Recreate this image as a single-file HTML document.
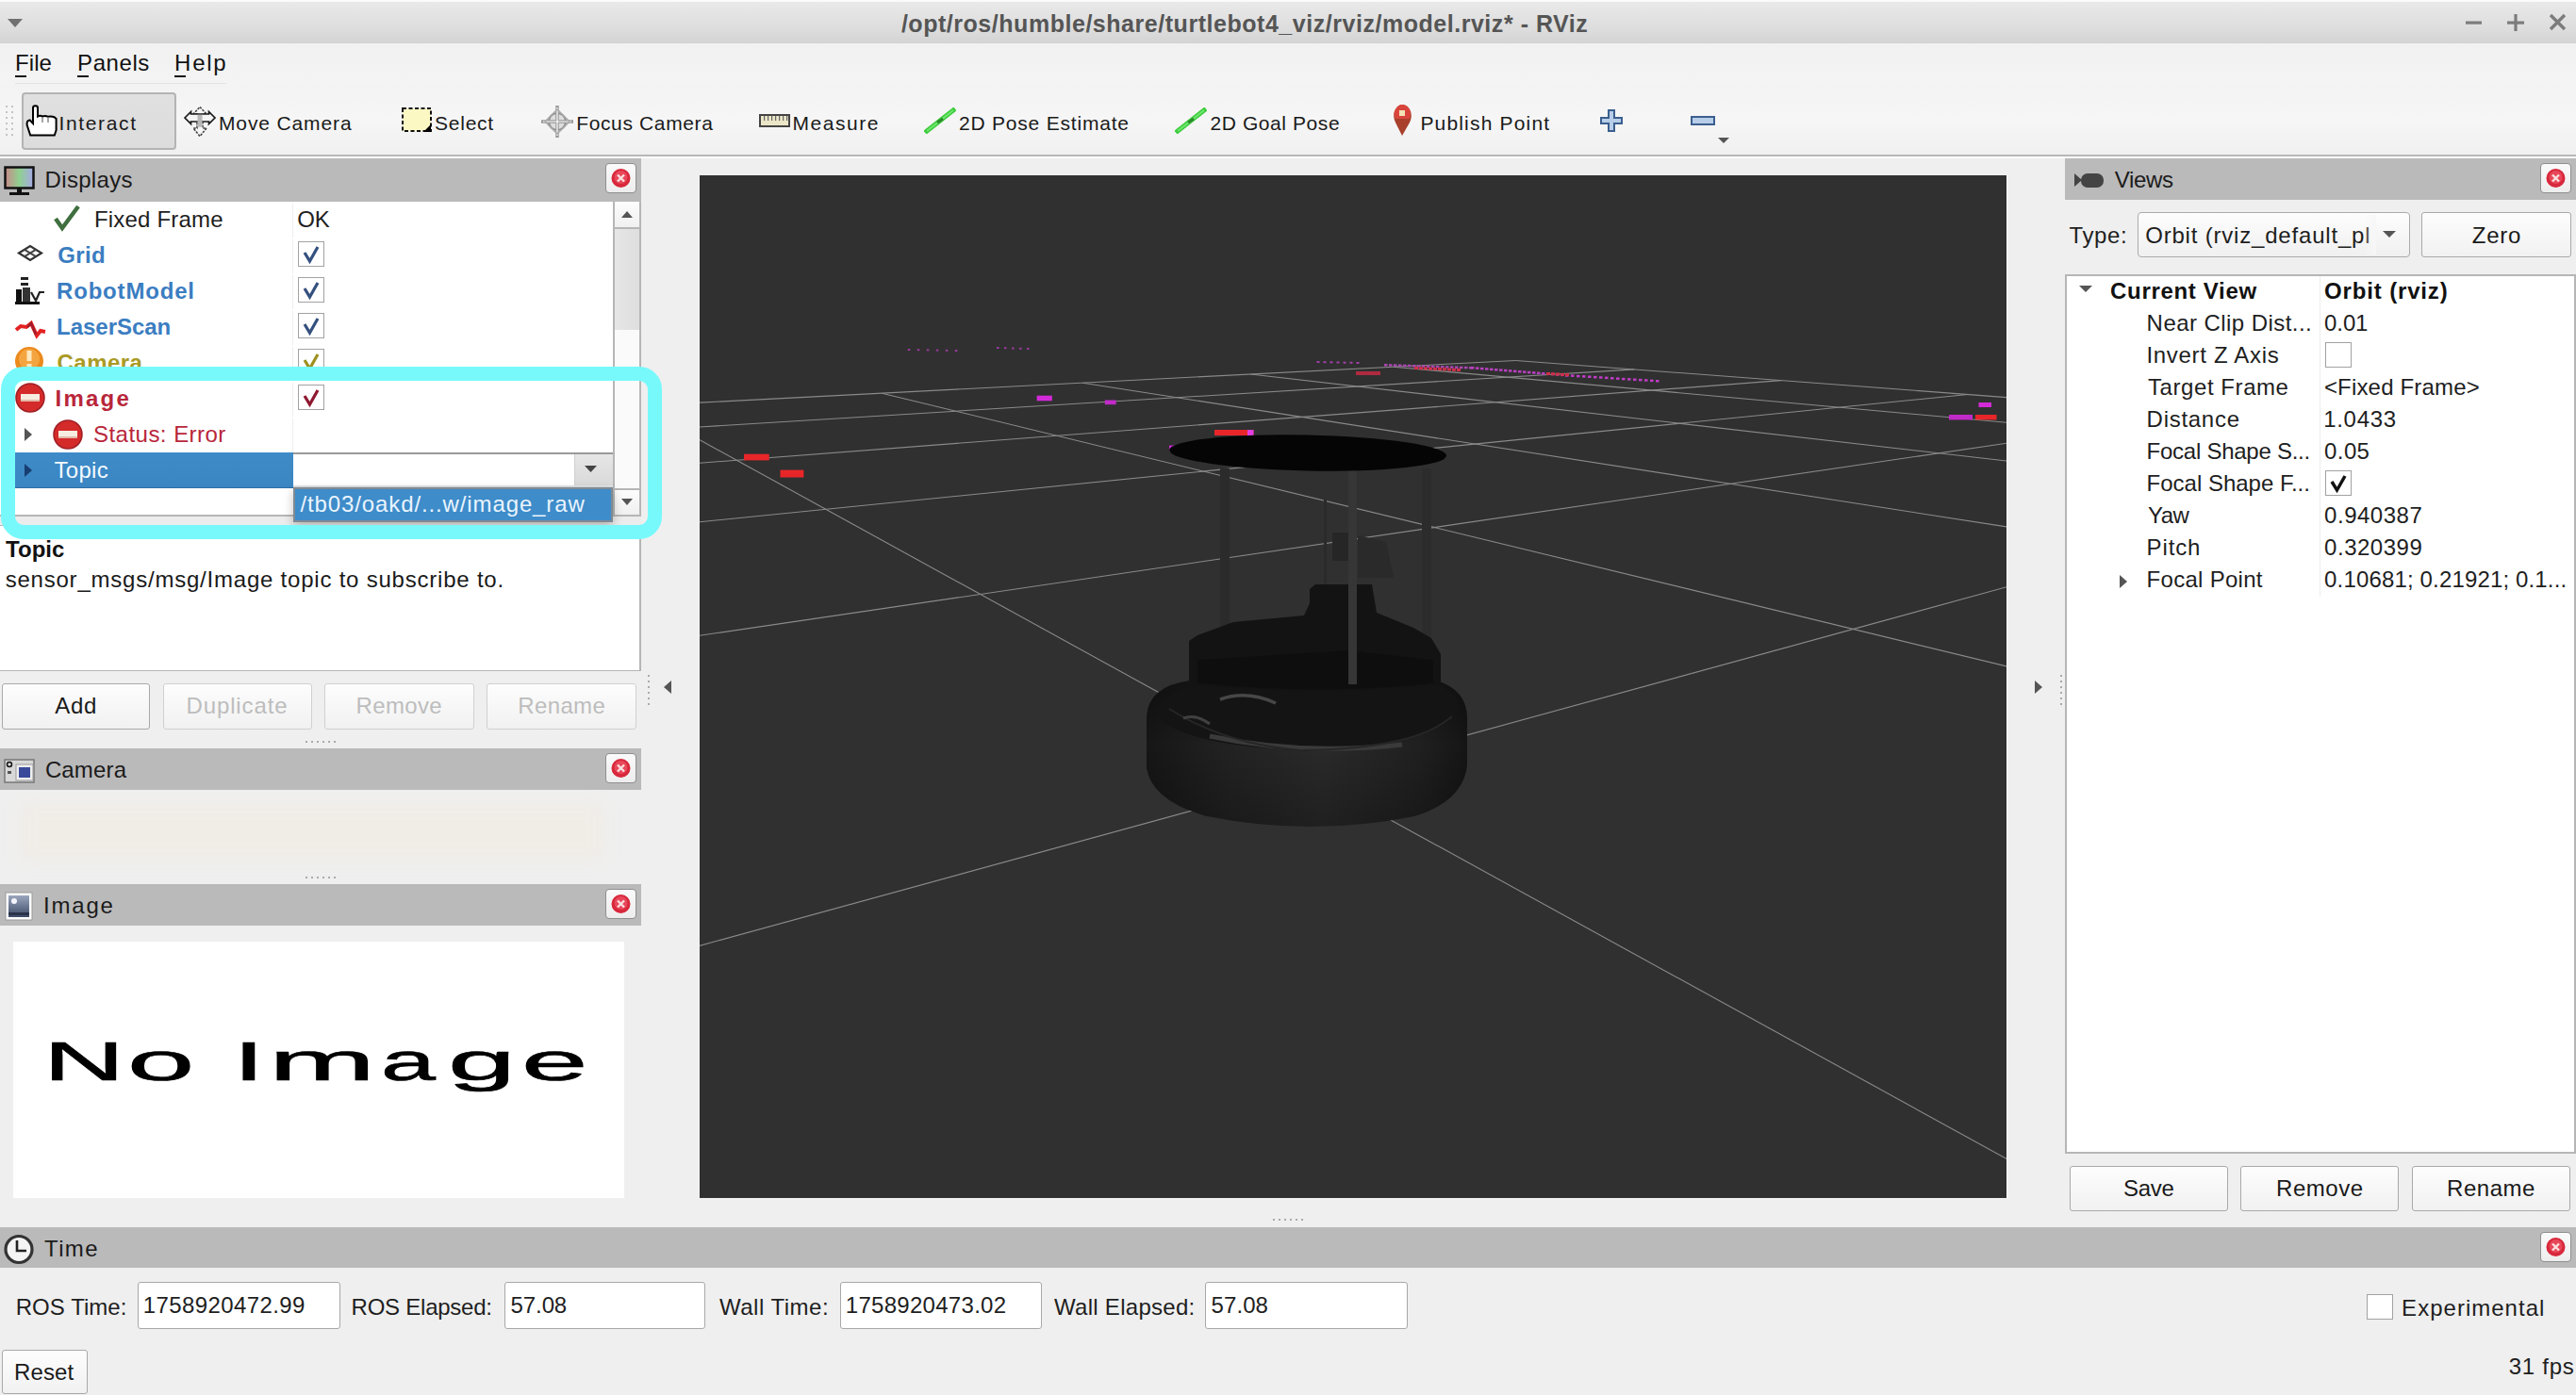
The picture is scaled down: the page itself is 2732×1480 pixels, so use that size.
<!DOCTYPE html><html><head><meta charset="utf-8"><style>html,body{margin:0;padding:0}body{width:2732px;height:1480px;overflow:hidden;position:relative;background:#efefef;font-family:"Liberation Sans",sans-serif}.t{position:absolute;white-space:nowrap}.r{position:absolute;display:block}</style></head><body><div class="r" style="left:0px;top:0px;width:2732px;height:2px;background:#fbfbfb"></div>
<div class="r" style="left:0px;top:2px;width:2732px;height:44px;background:linear-gradient(#e9e9e9,#dcdcdc 70%,#d3d3d3)"></div>
<svg class="r" style="left:6px;top:18px;" width="20" height="13" viewBox="0 0 20 13"><path d="M2 2 L18 2 L10 11 Z" fill="#707070"/></svg>
<div class="t" style="left:955.88px;top:13.34px;font-size:25px;line-height:25px;color:#555555;font-weight:bold;letter-spacing:0.534px;">/opt/ros/humble/share/turtlebot4_viz/rviz/model.rviz* - RViz</div>
<svg class="r" style="left:2600px;top:10px;" width="132" height="30" viewBox="0 0 132 30"><rect x="15" y="12.5" width="17" height="3.2" fill="#7c7c7c"/><rect x="59" y="12.5" width="18" height="3.2" fill="#7c7c7c"/><rect x="66.4" y="5" width="3.2" height="18" fill="#7c7c7c"/><path d="M105 6 L120 21 M120 6 L105 21" stroke="#7c7c7c" stroke-width="3.4"/></svg>
<div class="r" style="left:0px;top:46px;width:2732px;height:44px;background:linear-gradient(#f1f1f1,#f4f4f4)"></div>
<div class="t" style="left:16.12px;top:55.28px;font-size:24px;line-height:24px;color:#111;letter-spacing:0.042px;">File</div>
<div class="r" style="left:16px;top:80px;width:12px;height:2px;background:#111"></div>
<div class="t" style="left:82.12px;top:55.28px;font-size:24px;line-height:24px;color:#111;letter-spacing:0.570px;">Panels</div>
<div class="r" style="left:82px;top:80px;width:12px;height:2px;background:#111"></div>
<div class="t" style="left:185.12px;top:55.28px;font-size:24px;line-height:24px;color:#111;letter-spacing:1.700px;">Help</div>
<div class="r" style="left:185px;top:80px;width:12px;height:2px;background:#111"></div>
<div class="r" style="left:16px;top:88px;width:224px;height:1px;background:#e2e2e2"></div>
<div class="r" style="left:0px;top:90px;width:2732px;height:74px;background:linear-gradient(#f3f3f3,#f6f6f6 50%,#f0f0f0)"></div>
<div class="r" style="left:0px;top:164px;width:2732px;height:2px;background:#b8b8b8"></div>
<div class="r" style="left:0px;top:166px;width:2732px;height:2px;background:#fdfdfd"></div>
<svg class="r" style="left:6px;top:112px;" width="10" height="36" viewBox="0 0 10 36"><rect x="0" y="0" width="2" height="2" fill="#c4c4c4"/><rect x="0" y="6" width="2" height="2" fill="#c4c4c4"/><rect x="0" y="12" width="2" height="2" fill="#c4c4c4"/><rect x="0" y="18" width="2" height="2" fill="#c4c4c4"/><rect x="0" y="24" width="2" height="2" fill="#c4c4c4"/><rect x="0" y="30" width="2" height="2" fill="#c4c4c4"/><rect x="6" y="0" width="2" height="2" fill="#c4c4c4"/><rect x="6" y="6" width="2" height="2" fill="#c4c4c4"/><rect x="6" y="12" width="2" height="2" fill="#c4c4c4"/><rect x="6" y="18" width="2" height="2" fill="#c4c4c4"/><rect x="6" y="24" width="2" height="2" fill="#c4c4c4"/><rect x="6" y="30" width="2" height="2" fill="#c4c4c4"/></svg>
<div class="r" style="left:23px;top:98px;width:164px;height:61px;background:linear-gradient(#e0e0e0,#dcdcdc);border:2px solid #b4b4b4;border-radius:4px;box-sizing:border-box"></div>
<div class="t" style="left:62.53px;top:119.72px;font-size:21px;line-height:21px;color:#1a1a1a;letter-spacing:1.639px;">Interact</div>
<div class="t" style="left:231.97px;top:119.72px;font-size:21px;line-height:21px;color:#1a1a1a;letter-spacing:0.872px;">Move Camera</div>
<div class="t" style="left:461.12px;top:119.72px;font-size:21px;line-height:21px;color:#1a1a1a;letter-spacing:0.725px;">Select</div>
<div class="t" style="left:611.17px;top:119.72px;font-size:21px;line-height:21px;color:#1a1a1a;letter-spacing:0.643px;">Focus Camera</div>
<div class="t" style="left:840.38px;top:119.72px;font-size:21px;line-height:21px;color:#1a1a1a;letter-spacing:1.562px;">Measure</div>
<div class="t" style="left:1017.00px;top:119.72px;font-size:21px;line-height:21px;color:#1a1a1a;letter-spacing:0.792px;">2D Pose Estimate</div>
<div class="t" style="left:1283.50px;top:119.72px;font-size:21px;line-height:21px;color:#1a1a1a;letter-spacing:0.577px;">2D Goal Pose</div>
<div class="t" style="left:1506.38px;top:119.72px;font-size:21px;line-height:21px;color:#1a1a1a;letter-spacing:1.177px;">Publish Point</div>
<svg class="r" style="left:26px;top:110px;" width="36" height="36" viewBox="0 0 36 36"><path d="M9 4.5 Q9 2.2 11.5 2.2 Q14 2.2 14 4.5 L14 13.5 Q16.5 12.2 19 13.5 Q22 12.2 25 13.8 Q28.5 12.8 32 14.5 L33.6 16 L33.6 28 L31.8 33.6 L6.2 33.6 L2.6 22.5 Q2.2 17.6 5.6 17.4 L9 21 Z" fill="#fff" stroke="#000" stroke-width="2"/><path d="M19 14 L19 20 M25 14 L25 20" stroke="#777" stroke-width="1.3"/></svg>
<svg class="r" style="left:194px;top:112px;" width="36" height="34" viewBox="0 0 36 34"><path d="M18 1.5 L25 9 L21 9 L21 24 L25 24 L18 32.5 L11 24 L15 24 L15 9 L11 9 Z" fill="#f6f6f6" stroke="#444" stroke-width="1.6" stroke-dasharray="2.5 1.2"/><path d="M2 13 L8.5 6.5 L8.5 9 L27.5 9 L27.5 6.5 L34 13 L27.5 19.5 L27.5 17 L8.5 17 L8.5 19.5 Z" fill="#f4f4f4" stroke="#1a1a1a" stroke-width="1.7"/><rect x="15.5" y="9.8" width="5" height="13" fill="#b8b8b8"/></svg>
<svg class="r" style="left:424px;top:112px;" width="36" height="30" viewBox="0 0 36 30"><rect x="3" y="3" width="30" height="24" fill="#fbf8c4" stroke="#111" stroke-width="2" stroke-dasharray="4 2.5"/><path d="M33 20 L33 28 L25 28 Z" fill="#000"/></svg>
<svg class="r" style="left:572px;top:110px;" width="38" height="38" viewBox="0 0 38 38"><circle cx="19" cy="19" r="9" fill="#ddd" stroke="#888" stroke-width="2"/><path d="M19 2 L19 36 M2 19 L36 19" stroke="#999" stroke-width="3.5"/><path d="M19 4 L19 34 M4 19 L34 19" stroke="#fff" stroke-width="1.2"/><path d="M19 6 L32 19 L19 32 L6 19 Z" fill="none" stroke="#aaa" stroke-width="1.5"/></svg>
<svg class="r" style="left:804px;top:120px;" width="36" height="16" viewBox="0 0 36 16"><rect x="2" y="2" width="31" height="12" fill="#ebe6c8" stroke="#444" stroke-width="2"/><rect x="6" y="3" width="1.2" height="5" fill="#666"/><rect x="10" y="3" width="1.2" height="5" fill="#666"/><rect x="14" y="3" width="1.2" height="5" fill="#666"/><rect x="18" y="3" width="1.2" height="5" fill="#666"/><rect x="22" y="3" width="1.2" height="5" fill="#666"/><rect x="26" y="3" width="1.2" height="5" fill="#666"/><rect x="30" y="3" width="1.2" height="5" fill="#666"/></svg>
<svg class="r" style="left:980px;top:114px;" width="34" height="28" viewBox="0 0 34 28"><path d="M3 25 L31 3" stroke="#3ccc3c" stroke-width="5" stroke-linecap="square"/><path d="M3 25 L31 3" stroke="#6fe66f" stroke-width="2"/><path d="M14 16 L20 12" stroke="#2a8a2a" stroke-width="3"/></svg>
<svg class="r" style="left:1246px;top:114px;" width="34" height="28" viewBox="0 0 34 28"><path d="M3 25 L31 3" stroke="#3ccc3c" stroke-width="5" stroke-linecap="square"/><path d="M3 25 L31 3" stroke="#6fe66f" stroke-width="2"/><path d="M14 16 L20 12" stroke="#2a8a2a" stroke-width="3"/></svg>
<svg class="r" style="left:1476px;top:110px;" width="24" height="36" viewBox="0 0 24 36"><path d="M11 34 L4 20 Q1 14 3 8 Q6 1 11 1 Q17 1 20 8 Q22 14 19 20 Z" fill="#a8402c"/><path d="M4 16 Q1 10 4 6 Q7 1 11 1 Q16 1 19 6 Q21 10 19 16 Z" fill="#d9453c"/><rect x="8" y="7" width="6" height="6" fill="#f3e4b4"/></svg>
<svg class="r" style="left:1696px;top:115px;" width="28" height="26" viewBox="0 0 28 26"><path d="M10 2 L16 2 L16 10 L24 10 L24 16 L16 16 L16 24 L10 24 L10 16 L2 16 L2 10 L10 10 Z" fill="#b7cde8" stroke="#3b5f8f" stroke-width="2"/></svg>
<svg class="r" style="left:1792px;top:122px;" width="28" height="12" viewBox="0 0 28 12"><rect x="2" y="2" width="24" height="8" fill="#b7cde8" stroke="#3b5f8f" stroke-width="2"/></svg>
<svg class="r" style="left:1820px;top:144px;" width="16" height="9" viewBox="0 0 16 9"><path d="M2 2 L14 2 L8 8 Z" fill="#555"/></svg>
<div class="r" style="left:0px;top:168px;width:680px;height:46px;background:#bababa"></div>
<svg class="r" style="left:4px;top:176px" width="33" height="32" viewBox="0 0 33 32"><defs><linearGradient id="mg" x1="0" x2="1"><stop offset="0" stop-color="#c98a8a"/><stop offset="0.5" stop-color="#8fd08f"/><stop offset="1" stop-color="#a8a8e8"/></linearGradient></defs><rect x="1.5" y="1.5" width="30" height="22" fill="url(#mg)" stroke="#111" stroke-width="2.5"/><rect x="14" y="24" width="5" height="4" fill="#111"/><rect x="6" y="28" width="21" height="3" fill="#111"/></svg>
<div class="t" style="left:47.62px;top:179.18px;font-size:24px;line-height:24px;color:#1b1b1b;letter-spacing:0.311px;">Displays</div>
<div class="r" style="left:642px;top:173px;width:33px;height:32px;background:linear-gradient(#fafafa,#ededed);border:1.5px solid #8f8f8f;border-radius:4px;box-sizing:border-box"></div>
<svg class="r" style="left:648px;top:178px;" width="21" height="22" viewBox="0 0 21 22"><circle cx="10.5" cy="11" r="10" fill="#d8283c"/><circle cx="10.5" cy="10" r="7" fill="#e8485a"/><path d="M7 7.5 L14 14.5 M14 7.5 L7 14.5" stroke="#fbe0e0" stroke-width="2.4"/></svg>
<div class="r" style="left:0px;top:214px;width:651px;height:333px;background:#fff"></div>
<div class="r" style="left:650px;top:214px;width:2px;height:333px;background:#b6b6b6"></div>
<div class="r" style="left:678px;top:214px;width:2px;height:343px;background:#b6b6b6"></div>
<div class="r" style="left:652px;top:214px;width:26px;height:27px;background:linear-gradient(#fdfdfd,#f0f0f0)"></div>
<svg class="r" style="left:652px;top:214px;" width="26" height="27" viewBox="0 0 26 27"><path d="M7 17 L19 17 L13 10 Z" fill="#555"/></svg>
<div class="r" style="left:652px;top:241px;width:26px;height:2px;background:#b6b6b6"></div>
<div class="r" style="left:652px;top:243px;width:26px;height:107px;background:linear-gradient(90deg,#e6e6e6,#dedede)"></div>
<div class="r" style="left:652px;top:350px;width:26px;height:168px;background:#fafafa"></div>
<div class="r" style="left:652px;top:518px;width:26px;height:2px;background:#b6b6b6"></div>
<div class="r" style="left:652px;top:520px;width:26px;height:26px;background:linear-gradient(#fdfdfd,#f0f0f0)"></div>
<svg class="r" style="left:652px;top:520px;" width="26" height="26" viewBox="0 0 26 26"><path d="M7 9 L19 9 L13 16 Z" fill="#555"/></svg>
<div class="r" style="left:0px;top:546px;width:680px;height:2px;background:#b6b6b6"></div>
<div class="r" style="left:0px;top:548px;width:680px;height:9px;background:#ececec"></div>
<div class="r" style="left:310px;top:216px;width:1px;height:36px;background:#ededed"></div>
<div class="r" style="left:310px;top:254px;width:1px;height:36px;background:#ededed"></div>
<div class="r" style="left:310px;top:292px;width:1px;height:36px;background:#ededed"></div>
<div class="r" style="left:310px;top:330px;width:1px;height:36px;background:#ededed"></div>
<div class="r" style="left:310px;top:368px;width:1px;height:36px;background:#ededed"></div>
<div class="r" style="left:310px;top:406px;width:1px;height:36px;background:#ededed"></div>
<div class="r" style="left:310px;top:444px;width:1px;height:36px;background:#ededed"></div>
<div class="t" style="left:99.92px;top:220.98px;font-size:24px;line-height:24px;color:#1e1e1e;letter-spacing:0.202px;">Fixed Frame</div>
<svg class="r" style="left:56px;top:216px;" width="30" height="30" viewBox="0 0 30 30"><path d="M3 16 L10 26 L27 3" fill="none" stroke="#3f6f3f" stroke-width="4.5"/></svg>
<div class="t" style="left:315.27px;top:220.98px;font-size:24px;line-height:24px;color:#1e1e1e;letter-spacing:-0.150px;">OK</div>
<div class="t" style="left:61.33px;top:258.98px;font-size:24px;line-height:24px;color:#3b7dc1;font-weight:bold;letter-spacing:0.308px;">Grid</div>
<svg class="r" style="left:16px;top:258px;" width="32" height="22" viewBox="0 0 32 22"><path d="M4 10.5 L16 3 L28 10.5 L16 18 Z" fill="none" stroke="#333" stroke-width="2.2"/><path d="M10 6.8 L22 14.2 M22 6.8 L10 14.2" stroke="#444" stroke-width="2"/></svg>
<div class="r" style="left:316px;top:256px;width:28px;height:27px;background:#fff;border:1.5px solid #a2a2a2;box-sizing:border-box"></div>
<svg class="r" style="left:316px;top:256px;" width="28" height="27" viewBox="0 0 28 27"><path d="M7 12 L12.5 21 L21 6" fill="none" stroke="#34507e" stroke-width="3.2" stroke-linejoin="miter"/></svg>
<div class="t" style="left:60.00px;top:296.98px;font-size:24px;line-height:24px;color:#3b7dc1;font-weight:bold;letter-spacing:0.822px;">RobotModel</div>
<svg class="r" style="left:14px;top:292px;" width="36" height="34" viewBox="0 0 36 34"><rect x="8" y="2" width="8" height="3" fill="#222"/><rect x="8" y="8" width="8" height="3" fill="#222"/><rect x="3" y="15" width="6" height="14" fill="#111"/><rect x="10" y="13" width="8" height="16" fill="#333"/><path d="M19 18 L24 27 L28 18 L33 18" fill="none" stroke="#222" stroke-width="2.2"/><rect x="2" y="28" width="26" height="3" fill="#111"/></svg>
<div class="r" style="left:316px;top:294px;width:28px;height:27px;background:#fff;border:1.5px solid #a2a2a2;box-sizing:border-box"></div>
<svg class="r" style="left:316px;top:294px;" width="28" height="27" viewBox="0 0 28 27"><path d="M7 12 L12.5 21 L21 6" fill="none" stroke="#34507e" stroke-width="3.2" stroke-linejoin="miter"/></svg>
<div class="t" style="left:60.10px;top:335.18px;font-size:24px;line-height:24px;color:#3b7dc1;font-weight:bold;letter-spacing:-0.037px;">LaserScan</div>
<svg class="r" style="left:14px;top:338px;" width="36" height="24" viewBox="0 0 36 24"><path d="M3 12 L8 8 L14 9 L19 5 L25 18 L29 13 L34 14" fill="none" stroke="#e42222" stroke-width="4"/><path d="M15 9 L19 5 L24 17" fill="none" stroke="#a01c2a" stroke-width="2.4"/></svg>
<div class="r" style="left:316px;top:332px;width:28px;height:27px;background:#fff;border:1.5px solid #a2a2a2;box-sizing:border-box"></div>
<svg class="r" style="left:316px;top:332px;" width="28" height="27" viewBox="0 0 28 27"><path d="M7 12 L12.5 21 L21 6" fill="none" stroke="#34507e" stroke-width="3.2" stroke-linejoin="miter"/></svg>
<div class="t" style="left:60.62px;top:372.98px;font-size:24px;line-height:24px;color:#a99a26;font-weight:bold;letter-spacing:0.425px;">Camera</div>
<svg class="r" style="left:14px;top:366px;" width="36" height="34" viewBox="0 0 36 34"><circle cx="17" cy="17" r="15" fill="#ec8a1c"/><circle cx="17" cy="15" r="11" fill="#f5a540"/><rect x="14.5" y="6" width="5" height="11" fill="#fde9c0"/><rect x="14.5" y="20" width="5" height="5" fill="#fde9c0"/></svg>
<div class="r" style="left:316px;top:370px;width:28px;height:27px;background:#fff;border:1.5px solid #a2a2a2;box-sizing:border-box"></div>
<svg class="r" style="left:316px;top:370px;" width="28" height="27" viewBox="0 0 28 27"><path d="M7 12 L12.5 21 L21 6" fill="none" stroke="#9c9020" stroke-width="3.2" stroke-linejoin="miter"/></svg>
<div class="t" style="left:58.50px;top:410.98px;font-size:24px;line-height:24px;color:#b8263a;font-weight:bold;letter-spacing:2.219px;">Image</div>
<svg class="r" style="left:16px;top:406px;" width="32" height="32" viewBox="0 0 32 32"><circle cx="16" cy="16" r="15" fill="#d42a2a" stroke="#9e1e24" stroke-width="1.5"/><rect x="6" y="12" width="20" height="8" fill="#f6ece0"/><rect x="6" y="18" width="20" height="2" fill="#e3b8a8"/></svg>
<div class="r" style="left:316px;top:408px;width:28px;height:27px;background:#fff;border:1.5px solid #a2a2a2;box-sizing:border-box"></div>
<svg class="r" style="left:316px;top:408px;" width="28" height="27" viewBox="0 0 28 27"><path d="M7 12 L12.5 21 L21 6" fill="none" stroke="#8e1830" stroke-width="3.2" stroke-linejoin="miter"/></svg>
<svg class="r" style="left:56px;top:445px;" width="32" height="32" viewBox="0 0 32 32"><circle cx="16" cy="16" r="15" fill="#d42a2a" stroke="#9e1e24" stroke-width="1.5"/><rect x="6" y="12" width="20" height="8" fill="#f6ece0"/><rect x="6" y="18" width="20" height="2" fill="#e3b8a8"/></svg>
<svg class="r" style="left:24px;top:452px;" width="12" height="18" viewBox="0 0 12 18"><path d="M2 2 L10 9 L2 16 Z" fill="#555"/></svg>
<div class="t" style="left:99.00px;top:448.98px;font-size:24px;line-height:24px;color:#b8263a;letter-spacing:0.469px;">Status: Error</div>
<div class="r" style="left:16px;top:480px;width:295px;height:38px;background:linear-gradient(#3e8bc8,#3a86c3);border-bottom:1.5px solid #2f6ea4;box-sizing:border-box"></div>
<svg class="r" style="left:24px;top:490px;" width="12" height="18" viewBox="0 0 12 18"><path d="M2 2 L10 9 L2 16 Z" fill="#173e70"/></svg>
<div class="t" style="left:57.50px;top:486.98px;font-size:24px;line-height:24px;color:#f4faff;letter-spacing:0.281px;">Topic</div>
<div class="r" style="left:311px;top:480px;width:339px;height:37px;background:#fff;border-top:2px solid #9a9a9a;box-sizing:border-box"></div>
<div class="r" style="left:609px;top:482px;width:40px;height:34px;background:linear-gradient(#e6e6e6,#d9d9d9);border-left:1px solid #cfcfcf"></div>
<svg class="r" style="left:609px;top:482px;" width="40" height="34" viewBox="0 0 40 34"><path d="M11 12 L24 12 L17.5 19 Z" fill="#444"/></svg>
<div class="r" style="left:311px;top:515px;width:339px;height:4px;background:linear-gradient(#eee,#bbb)"></div>
<div class="r" style="left:311px;top:517px;width:339px;height:37px;background:#3e8cc9;border:2px solid #7f8a94;box-sizing:border-box;box-shadow:0 4px 10px rgba(0,0,0,0.25)"></div>
<div class="t" style="left:318.50px;top:523.18px;font-size:24px;line-height:24px;color:#eaf4ff;letter-spacing:0.880px;">/tb03/oakd/...w/image_raw</div>
<div class="r" style="left:0px;top:557px;width:680px;height:155px;background:#fff;border-top:1.5px solid #b6b6b6;border-right:2px solid #b6b6b6;border-bottom:1.5px solid #b6b6b6;box-sizing:border-box"></div>
<div class="t" style="left:6.05px;top:571.18px;font-size:24px;line-height:24px;color:#111;font-weight:bold;letter-spacing:0.031px;">Topic</div>
<div class="t" style="left:5.67px;top:603.18px;font-size:24px;line-height:24px;color:#1a1a1a;letter-spacing:0.781px;">sensor_msgs/msg/Image topic to subscribe to.</div>
<div class="r" style="left:2px;top:725px;width:157px;height:49px;background:linear-gradient(#fdfdfd,#f1f1f1);border:1.5px solid #a9a9a9;border-radius:3px;box-sizing:border-box"></div>
<div class="t" style="left:58.30px;top:736.68px;font-size:24px;line-height:24px;color:#1a1a1a;letter-spacing:0.725px;">Add</div>
<div class="r" style="left:173px;top:725px;width:158px;height:49px;background:linear-gradient(#fdfdfd,#f1f1f1);border:1.5px solid #d0d0d0;border-radius:3px;box-sizing:border-box"></div>
<div class="t" style="left:197.43px;top:736.68px;font-size:24px;line-height:24px;color:#bdbdbd;letter-spacing:0.894px;">Duplicate</div>
<div class="r" style="left:344px;top:725px;width:159px;height:49px;background:linear-gradient(#fdfdfd,#f1f1f1);border:1.5px solid #d0d0d0;border-radius:3px;box-sizing:border-box"></div>
<div class="t" style="left:377.52px;top:736.68px;font-size:24px;line-height:24px;color:#bdbdbd;letter-spacing:0.360px;">Remove</div>
<div class="r" style="left:516px;top:725px;width:159px;height:49px;background:linear-gradient(#fdfdfd,#f1f1f1);border:1.5px solid #d0d0d0;border-radius:3px;box-sizing:border-box"></div>
<div class="t" style="left:549.33px;top:736.68px;font-size:24px;line-height:24px;color:#bdbdbd;letter-spacing:0.345px;">Rename</div>
<svg class="r" style="left:323px;top:785px;" width="34" height="3" viewBox="0 0 34 3"><rect x="1" y="1" width="2" height="2" fill="#aaa"/><rect x="7" y="1" width="2" height="2" fill="#aaa"/><rect x="13" y="1" width="2" height="2" fill="#aaa"/><rect x="19" y="1" width="2" height="2" fill="#aaa"/><rect x="25" y="1" width="2" height="2" fill="#aaa"/><rect x="31" y="1" width="2" height="2" fill="#aaa"/></svg>
<div class="r" style="left:0px;top:794px;width:680px;height:44px;background:#bababa"></div>
<svg class="r" style="left:4px;top:801px" width="33" height="31" viewBox="0 0 33 31"><rect x="1" y="5" width="31" height="24" fill="#d8d8d8" stroke="#777" stroke-width="1.5"/><circle cx="6" cy="10" r="2.5" fill="none" stroke="#111" stroke-width="1.5"/><rect x="4" y="17" width="4" height="3" fill="#555"/><rect x="13" y="10" width="18" height="17" fill="#eee" stroke="#999"/><rect x="16" y="13" width="12" height="11" fill="#3a4a9a"/></svg>
<div class="t" style="left:47.88px;top:805.18px;font-size:24px;line-height:24px;color:#1b1b1b;letter-spacing:0.150px;">Camera</div>
<div class="r" style="left:642px;top:799px;width:33px;height:32px;background:linear-gradient(#fafafa,#ededed);border:1.5px solid #8f8f8f;border-radius:4px;box-sizing:border-box"></div>
<svg class="r" style="left:648px;top:804px;" width="21" height="22" viewBox="0 0 21 22"><circle cx="10.5" cy="11" r="10" fill="#d8283c"/><circle cx="10.5" cy="10" r="7" fill="#e8485a"/><path d="M7 7.5 L14 14.5 M14 7.5 L7 14.5" stroke="#fbe0e0" stroke-width="2.4"/></svg>
<div class="r" style="left:22px;top:852px;width:618px;height:60px;background:#f1ece5;filter:blur(8px);opacity:0.8"></div>
<svg class="r" style="left:323px;top:929px;" width="34" height="3" viewBox="0 0 34 3"><rect x="1" y="1" width="2" height="2" fill="#aaa"/><rect x="7" y="1" width="2" height="2" fill="#aaa"/><rect x="13" y="1" width="2" height="2" fill="#aaa"/><rect x="19" y="1" width="2" height="2" fill="#aaa"/><rect x="25" y="1" width="2" height="2" fill="#aaa"/><rect x="31" y="1" width="2" height="2" fill="#aaa"/></svg>
<div class="r" style="left:0px;top:938px;width:680px;height:44px;background:#bababa"></div>
<svg class="r" style="left:5px;top:946px" width="30" height="31" viewBox="0 0 30 31"><rect x="1" y="1" width="28" height="29" fill="#fff" stroke="#999" stroke-width="1"/><defs><linearGradient id="ig" x1="0" y1="0" x2="0" y2="1"><stop offset="0" stop-color="#9aa6bd"/><stop offset="1" stop-color="#3d4a66"/></linearGradient></defs><rect x="4" y="4" width="22" height="23" fill="url(#ig)"/><circle cx="10" cy="10" r="3" fill="#f4f4ff"/><rect x="4" y="22" width="22" height="3" fill="#2a334a"/></svg>
<div class="t" style="left:45.88px;top:949.18px;font-size:24px;line-height:24px;color:#1b1b1b;letter-spacing:1.844px;">Image</div>
<div class="r" style="left:642px;top:943px;width:33px;height:32px;background:linear-gradient(#fafafa,#ededed);border:1.5px solid #8f8f8f;border-radius:4px;box-sizing:border-box"></div>
<svg class="r" style="left:648px;top:948px;" width="21" height="22" viewBox="0 0 21 22"><circle cx="10.5" cy="11" r="10" fill="#d8283c"/><circle cx="10.5" cy="10" r="7" fill="#e8485a"/><path d="M7 7.5 L14 14.5 M14 7.5 L7 14.5" stroke="#fbe0e0" stroke-width="2.4"/></svg>
<div class="r" style="left:14px;top:999px;width:648px;height:272px;background:#fff"></div>
<div class="t" style="left:46.21px;top:1098px;font-size:57.5px;line-height:57.5px;color:#000;-webkit-text-stroke:0.7px #000;transform:scaleX(2.074);transform-origin:0 0">N</div>
<div class="t" style="left:134.71px;top:1098px;font-size:57.5px;line-height:57.5px;color:#000;-webkit-text-stroke:0.7px #000;transform:scaleX(2.228);transform-origin:0 0">o</div>
<div class="t" style="left:246.73px;top:1098px;font-size:57.5px;line-height:57.5px;color:#000;-webkit-text-stroke:0.7px #000;transform:scaleX(2.109);transform-origin:0 0">I</div>
<div class="t" style="left:285.14px;top:1098px;font-size:57.5px;line-height:57.5px;color:#000;-webkit-text-stroke:0.7px #000;transform:scaleX(2.363);transform-origin:0 0">m</div>
<div class="t" style="left:403.70px;top:1098px;font-size:57.5px;line-height:57.5px;color:#000;-webkit-text-stroke:0.7px #000;transform:scaleX(1.809);transform-origin:0 0">a</div>
<div class="t" style="left:474.66px;top:1098px;font-size:57.5px;line-height:57.5px;color:#000;-webkit-text-stroke:0.7px #000;transform:scaleX(2.250);transform-origin:0 0">g</div>
<div class="t" style="left:552.77px;top:1098px;font-size:57.5px;line-height:57.5px;color:#000;-webkit-text-stroke:0.7px #000;transform:scaleX(2.201);transform-origin:0 0">e</div>
<svg class="r" style="left:686px;top:715px;" width="3" height="34" viewBox="0 0 3 34"><rect x="1" y="1" width="2" height="2" fill="#aaa"/><rect x="1" y="7" width="2" height="2" fill="#aaa"/><rect x="1" y="13" width="2" height="2" fill="#aaa"/><rect x="1" y="19" width="2" height="2" fill="#aaa"/><rect x="1" y="25" width="2" height="2" fill="#aaa"/><rect x="1" y="31" width="2" height="2" fill="#aaa"/></svg>
<svg class="r" style="left:702px;top:720px;" width="12" height="18" viewBox="0 0 12 18"><path d="M10 2 L10 16 L2 9 Z" fill="#555"/></svg>
<svg class="r" style="left:742px;top:186px;overflow:hidden" width="1386" height="1085" viewBox="0 0 1386 1085"><rect width="1386" height="1085" fill="#303030"/><g stroke="#8a8a8a" stroke-width="1.1" fill="none"><line x1="865.5" y1="196.5" x2="31773.0" y2="2518.3"/><line x1="865.5" y1="196.5" x2="-3200.4" y2="406.2"/><line x1="735.6" y1="203.2" x2="388040.5" y2="35370.9"/><line x1="991.3" y1="205.9" x2="-4585.2" y2="549.3"/><line x1="584.4" y1="211.0" x2="306972.6" y2="35370.9"/><line x1="1147.0" y1="217.6" x2="-8524.7" y2="956.3"/><line x1="406.3" y1="220.2" x2="225904.7" y2="35370.9"/><line x1="1344.9" y1="232.5" x2="-106015.7" y2="11030.4"/><line x1="193.4" y1="231.2" x2="144836.8" y2="35370.9"/><line x1="1604.9" y1="252.0" x2="-236937.6" y2="35370.9"/><line x1="-65.7" y1="244.5" x2="63768.9" y2="35370.9"/><line x1="1961.4" y1="278.8" x2="-125846.4" y2="35370.9"/><line x1="-387.8" y1="261.1" x2="-17299.1" y2="35370.9"/><line x1="2480.8" y1="317.8" x2="-14755.2" y2="35370.9"/><line x1="-799.0" y1="282.3" x2="-98367.0" y2="35370.9"/><line x1="3307.2" y1="379.9" x2="96336.0" y2="35370.9"/><line x1="-1342.4" y1="310.3" x2="-179434.9" y2="35370.9"/><line x1="4827.7" y1="494.1" x2="207427.2" y2="35370.9"/><line x1="-2093.6" y1="349.1" x2="-260502.8" y2="35370.9"/><line x1="8549.1" y1="773.7" x2="318518.5" y2="35370.9"/><line x1="-3200.4" y1="406.2" x2="-341570.7" y2="35370.9"/><line x1="31773.0" y1="2518.3" x2="429609.7" y2="35370.9"/></g><rect x="47.0" y="295.7" width="26.7" height="6.7" fill="#e8262a"/><rect x="85.5" y="312.6" width="24.9" height="7.9" fill="#e8262a"/><rect x="357.6" y="233.7" width="16.2" height="5.6" fill="#d32ad8"/><rect x="429.8" y="238.5" width="11.8" height="4.7" fill="#c02ac8"/><rect x="546.0" y="270.0" width="41.5" height="6.0" fill="#e8262a"/><rect x="581.0" y="270.0" width="6.5" height="6.0" fill="#e040e0"/><rect x="498.0" y="286.6" width="8.7" height="6.4" fill="#d32ad8"/><rect x="1356.5" y="241.0" width="13.5" height="5.0" fill="#d32ad8"/><rect x="1325.0" y="254.0" width="25.0" height="5.4" fill="#c02ac8"/><rect x="1353.0" y="254.0" width="22.5" height="5.4" fill="#e8262a"/><rect x="696.0" y="208.0" width="26.0" height="4.0" fill="#b02a40"/><rect x="220.8" y="184.0" width="2.5" height="2" fill="#9a3aa0"/><rect x="230.8" y="184.2" width="2.5" height="2" fill="#9a3aa0"/><rect x="240.8" y="184.4" width="2.5" height="2" fill="#9a3aa0"/><rect x="250.8" y="184.6" width="2.5" height="2" fill="#9a3aa0"/><rect x="260.8" y="184.8" width="2.5" height="2" fill="#9a3aa0"/><rect x="270.8" y="185.0" width="2.5" height="2" fill="#9a3aa0"/><rect x="315.0" y="182.0" width="2.5" height="2" fill="#9a3aa0"/><rect x="323.0" y="182.2" width="2.5" height="2" fill="#9a3aa0"/><rect x="331.0" y="182.5" width="2.5" height="2" fill="#9a3aa0"/><rect x="339.0" y="182.8" width="2.5" height="2" fill="#9a3aa0"/><rect x="347.0" y="183.0" width="2.5" height="2" fill="#9a3aa0"/><rect x="654.5" y="197.0" width="3" height="2" fill="#a040a8"/><rect x="661.5" y="197.2" width="3" height="2" fill="#a040a8"/><rect x="668.5" y="197.3" width="3" height="2" fill="#a040a8"/><rect x="675.5" y="197.5" width="3" height="2" fill="#a040a8"/><rect x="682.5" y="197.7" width="3" height="2" fill="#a040a8"/><rect x="689.5" y="197.8" width="3" height="2" fill="#a040a8"/><rect x="696.5" y="198.0" width="3" height="2" fill="#a040a8"/><rect x="726.0" y="200.0" width="3.5" height="2.5" fill="#a848b0"/><rect x="731.0" y="200.2" width="3.5" height="2.5" fill="#a848b0"/><rect x="736.0" y="200.3" width="3.5" height="2.5" fill="#a848b0"/><rect x="741.0" y="200.5" width="3.5" height="2.5" fill="#a848b0"/><rect x="746.0" y="200.7" width="3.5" height="2.5" fill="#a848b0"/><rect x="751.0" y="200.8" width="3.5" height="2.5" fill="#a848b0"/><rect x="756.0" y="201.0" width="3.5" height="2.5" fill="#a848b0"/><rect x="761.0" y="201.2" width="3.5" height="2.5" fill="#a848b0"/><rect x="766.0" y="201.3" width="3.5" height="2.5" fill="#a848b0"/><rect x="771.0" y="201.5" width="3.5" height="2.5" fill="#a848b0"/><rect x="776.0" y="201.7" width="3.5" height="2.5" fill="#a848b0"/><rect x="781.0" y="201.8" width="3.5" height="2.5" fill="#a848b0"/><rect x="786.0" y="202.0" width="3.5" height="2.5" fill="#a848b0"/><rect x="791.0" y="202.2" width="3.5" height="2.5" fill="#a848b0"/><rect x="796.0" y="202.3" width="3.5" height="2.5" fill="#a848b0"/><rect x="801.0" y="202.5" width="3.5" height="2.5" fill="#a848b0"/><rect x="806.0" y="202.7" width="3.5" height="2.5" fill="#a848b0"/><rect x="811.0" y="202.8" width="3.5" height="2.5" fill="#a848b0"/><rect x="816.0" y="203.0" width="3.5" height="2.5" fill="#a848b0"/><rect x="818.0" y="203.0" width="3.5" height="2.5" fill="#b840c0"/><rect x="823.0" y="203.4" width="3.5" height="2.5" fill="#b840c0"/><rect x="828.0" y="203.8" width="3.5" height="2.5" fill="#b840c0"/><rect x="833.0" y="204.2" width="3.5" height="2.5" fill="#b840c0"/><rect x="838.0" y="204.6" width="3.5" height="2.5" fill="#b840c0"/><rect x="843.0" y="205.0" width="3.5" height="2.5" fill="#b840c0"/><rect x="848.0" y="205.4" width="3.5" height="2.5" fill="#b840c0"/><rect x="853.0" y="205.8" width="3.5" height="2.5" fill="#b840c0"/><rect x="858.0" y="206.2" width="3.5" height="2.5" fill="#b840c0"/><rect x="863.0" y="206.6" width="3.5" height="2.5" fill="#b840c0"/><rect x="868.0" y="207.0" width="3.5" height="2.5" fill="#b840c0"/><rect x="873.0" y="207.4" width="3.5" height="2.5" fill="#b840c0"/><rect x="878.0" y="207.8" width="3.5" height="2.5" fill="#b840c0"/><rect x="883.0" y="208.2" width="3.5" height="2.5" fill="#b840c0"/><rect x="888.0" y="208.6" width="3.5" height="2.5" fill="#b840c0"/><rect x="893.0" y="209.0" width="3.5" height="2.5" fill="#b840c0"/><rect x="898.0" y="209.4" width="3.5" height="2.5" fill="#b840c0"/><rect x="903.0" y="209.8" width="3.5" height="2.5" fill="#b840c0"/><rect x="908.0" y="210.2" width="3.5" height="2.5" fill="#b840c0"/><rect x="913.0" y="210.6" width="3.5" height="2.5" fill="#b840c0"/><rect x="918.0" y="211.0" width="3.5" height="2.5" fill="#b840c0"/><rect x="918.0" y="211.0" width="3.5" height="2.5" fill="#c03cc8"/><rect x="924.0" y="211.4" width="3.5" height="2.5" fill="#c03cc8"/><rect x="930.0" y="211.8" width="3.5" height="2.5" fill="#c03cc8"/><rect x="936.0" y="212.1" width="3.5" height="2.5" fill="#c03cc8"/><rect x="942.0" y="212.5" width="3.5" height="2.5" fill="#c03cc8"/><rect x="948.0" y="212.9" width="3.5" height="2.5" fill="#c03cc8"/><rect x="954.0" y="213.2" width="3.5" height="2.5" fill="#c03cc8"/><rect x="960.0" y="213.6" width="3.5" height="2.5" fill="#c03cc8"/><rect x="966.0" y="214.0" width="3.5" height="2.5" fill="#c03cc8"/><rect x="972.0" y="214.4" width="3.5" height="2.5" fill="#c03cc8"/><rect x="978.0" y="214.8" width="3.5" height="2.5" fill="#c03cc8"/><rect x="984.0" y="215.1" width="3.5" height="2.5" fill="#c03cc8"/><rect x="990.0" y="215.5" width="3.5" height="2.5" fill="#c03cc8"/><rect x="996.0" y="215.9" width="3.5" height="2.5" fill="#c03cc8"/><rect x="1002.0" y="216.2" width="3.5" height="2.5" fill="#c03cc8"/><rect x="1008.0" y="216.6" width="3.5" height="2.5" fill="#c03cc8"/><rect x="1014.0" y="217.0" width="3.5" height="2.5" fill="#c03cc8"/><rect x="758.0" y="203.0" width="4" height="3" fill="#d0304a"/><rect x="763.0" y="203.2" width="4" height="3" fill="#d0304a"/><rect x="768.0" y="203.4" width="4" height="3" fill="#d0304a"/><rect x="773.0" y="203.7" width="4" height="3" fill="#d0304a"/><rect x="778.0" y="203.9" width="4" height="3" fill="#d0304a"/><rect x="783.0" y="204.1" width="4" height="3" fill="#d0304a"/><rect x="788.0" y="204.3" width="4" height="3" fill="#d0304a"/><rect x="793.0" y="204.6" width="4" height="3" fill="#d0304a"/><rect x="798.0" y="204.8" width="4" height="3" fill="#d0304a"/><rect x="803.0" y="205.0" width="4" height="3" fill="#d0304a"/><rect x="898.0" y="209.0" width="4" height="3" fill="#d0304a"/><rect x="903.0" y="209.2" width="4" height="3" fill="#d0304a"/><rect x="908.0" y="209.5" width="4" height="3" fill="#d0304a"/><rect x="913.0" y="209.8" width="4" height="3" fill="#d0304a"/><rect x="918.0" y="210.0" width="4" height="3" fill="#d0304a"/><defs><linearGradient id="bg1" x1="0" x2="1"><stop offset="0" stop-color="#1b1b1b"/><stop offset="0.5" stop-color="#262626"/><stop offset="1" stop-color="#1c1c1c"/></linearGradient><radialGradient id="bg2" cx="0.5" cy="0.3" r="0.7"><stop offset="0" stop-color="#232323"/><stop offset="1" stop-color="#151515"/></radialGradient></defs><defs><linearGradient id="bside" x1="0" x2="1"><stop offset="0" stop-color="#161616"/><stop offset="0.25" stop-color="#222"/><stop offset="0.55" stop-color="#2a2a2a"/><stop offset="0.85" stop-color="#202020"/><stop offset="1" stop-color="#151515"/></linearGradient><linearGradient id="bv" x1="0" y1="0" x2="0" y2="1"><stop offset="0" stop-color="#000" stop-opacity="0.35"/><stop offset="0.45" stop-color="#000" stop-opacity="0"/><stop offset="1" stop-color="#000" stop-opacity="0.25"/></linearGradient></defs><path d="M474.0,574.0 Q476.0,542.0 520.0,536.0 L773.0,534.0 Q814.0,542.0 814.0,576.0 L814.0,626.0 Q810.0,664.0 758.0,680.0 Q648.0,702.0 538.0,680.0 Q480.0,664.0 474.0,629.0 Z" fill="url(#bside)"/><path d="M474.0,574.0 Q476.0,542.0 520.0,536.0 L773.0,534.0 Q814.0,542.0 814.0,576.0 L814.0,626.0 Q810.0,664.0 758.0,680.0 Q648.0,702.0 538.0,680.0 Q480.0,664.0 474.0,629.0 Z" fill="url(#bv)"/><path d="M490.0,559.0 Q508.0,539.0 558.0,536.0 L758.0,534.0 Q803.0,542.0 806.0,564.0 Q788.0,604.0 638.0,610.0 Q528.0,606.0 490.0,579.0 Z" fill="#141414"/><path d="M541.0,595.0 Q638.0,616.0 745.0,604.0" fill="none" stroke="#3a3a3a" stroke-width="5"/><path d="M498.0,566.0 Q558.0,604.0 638.0,610.0 Q758.0,609.0 798.0,574.0" fill="none" stroke="#262626" stroke-width="2"/><path d="M552.0,556.0 Q580.0,546.0 611.0,560.0" fill="none" stroke="#474747" stroke-width="3.5"/><path d="M513.0,576.0 Q526.0,571.0 541.0,582.0" fill="none" stroke="#404040" stroke-width="3"/><rect x="552" y="311" width="10" height="228" fill="#2b2b2b"/><rect x="662" y="344" width="3" height="95" fill="#2a2a2a"/><rect x="766" y="311" width="10" height="201" fill="#2c2c2c"/><path d="M519.0,539.0 L519.0,494.0 L528.0,488.0 L566.0,474.0 L641.0,467.0 L647.0,454.0 L647.0,439.0 L653.0,434.0 L713.0,434.0 L718.0,464.0 L757.0,480.0 L776.0,491.0 L786.0,508.0 L786.0,539.0 Q658.0,554.0 519.0,539.0 Z" fill="#131313"/><path d="M528.0,514.0 L688.0,504.0 L778.0,514.0 L778.0,539.0 Q658.0,552.0 528.0,539.0 Z" fill="#000" opacity="0.22"/><rect x="671" y="379" width="17" height="30" fill="#262626"/><path d="M698.0,382.0 L728.0,389.0 L736.0,427.0 L698.0,427.0 Z" fill="#2a2a2a"/><rect x="688" y="311" width="9" height="229" fill="#363636"/><ellipse cx="0" cy="0" rx="147" ry="19" fill="#050505" transform="translate(645,294.5) rotate(1.2)"/></svg>
<div class="r" style="left:2128px;top:186px;width:1px;height:1085px;background:#fafafa"></div>
<svg class="r" style="left:2155px;top:720px;" width="14" height="18" viewBox="0 0 14 18"><path d="M3 2 L3 16 L11 9 Z" fill="#555"/></svg>
<svg class="r" style="left:2184px;top:715px;" width="3" height="34" viewBox="0 0 3 34"><rect x="1" y="1" width="2" height="2" fill="#aaa"/><rect x="1" y="7" width="2" height="2" fill="#aaa"/><rect x="1" y="13" width="2" height="2" fill="#aaa"/><rect x="1" y="19" width="2" height="2" fill="#aaa"/><rect x="1" y="25" width="2" height="2" fill="#aaa"/><rect x="1" y="31" width="2" height="2" fill="#aaa"/></svg>
<div class="r" style="left:2190px;top:168px;width:542px;height:44px;background:#bababa"></div>
<svg class="r" style="left:2198px;top:180px" width="36" height="24" viewBox="0 0 36 24"><path d="M2 4 L10 11 L2 18 Z" fill="#444"/><rect x="9" y="4" width="24" height="15" rx="7" fill="#444"/></svg>
<div class="t" style="left:2242.70px;top:179.18px;font-size:24px;line-height:24px;color:#1b1b1b;letter-spacing:-0.319px;">Views</div>
<div class="r" style="left:2694px;top:173px;width:33px;height:32px;background:linear-gradient(#fafafa,#ededed);border:1.5px solid #8f8f8f;border-radius:4px;box-sizing:border-box"></div>
<svg class="r" style="left:2700px;top:178px;" width="21" height="22" viewBox="0 0 21 22"><circle cx="10.5" cy="11" r="10" fill="#d8283c"/><circle cx="10.5" cy="10" r="7" fill="#e8485a"/><path d="M7 7.5 L14 14.5 M14 7.5 L7 14.5" stroke="#fbe0e0" stroke-width="2.4"/></svg>
<div class="t" style="left:2194.50px;top:238.28px;font-size:24px;line-height:24px;color:#1e1e1e;letter-spacing:0.600px;">Type:</div>
<div class="r" style="left:2267px;top:225px;width:289px;height:48px;background:linear-gradient(#fdfdfd,#f0f0f0);border:1.5px solid #ababab;border-radius:4px;box-sizing:border-box"></div>
<div class="t" style="left:2275.18px;top:238.28px;font-size:24px;line-height:24px;color:#1e1e1e;letter-spacing:0.807px;">Orbit (rviz_default_pl</div>
<div class="r" style="left:2508px;top:228px;width:12px;height:42px;background:linear-gradient(90deg,rgba(247,247,247,0),#f7f7f7)"></div>
<svg class="r" style="left:2524px;top:240px;" width="20" height="16" viewBox="0 0 20 16"><path d="M3 5 L17 5 L10 12 Z" fill="#555"/></svg>
<div class="r" style="left:2568px;top:225px;width:159px;height:48px;background:linear-gradient(#fdfdfd,#f1f1f1);border:1.5px solid #a9a9a9;border-radius:3px;box-sizing:border-box"></div>
<div class="t" style="left:2621.85px;top:238.28px;font-size:24px;line-height:24px;color:#1a1a1a;letter-spacing:0.725px;">Zero</div>
<div class="r" style="left:2190px;top:291px;width:542px;height:933px;background:#fff;border:2px solid #b6b6b6;box-sizing:border-box"></div>
<div class="r" style="left:2460px;top:293px;width:1px;height:34px;background:#ededed"></div>
<div class="r" style="left:2460px;top:327px;width:1px;height:34px;background:#ededed"></div>
<div class="r" style="left:2460px;top:361px;width:1px;height:34px;background:#ededed"></div>
<div class="r" style="left:2460px;top:395px;width:1px;height:34px;background:#ededed"></div>
<div class="r" style="left:2460px;top:429px;width:1px;height:34px;background:#ededed"></div>
<div class="r" style="left:2460px;top:463px;width:1px;height:34px;background:#ededed"></div>
<div class="r" style="left:2460px;top:497px;width:1px;height:34px;background:#ededed"></div>
<div class="r" style="left:2460px;top:531px;width:1px;height:34px;background:#ededed"></div>
<div class="r" style="left:2460px;top:565px;width:1px;height:34px;background:#ededed"></div>
<div class="r" style="left:2460px;top:599px;width:1px;height:34px;background:#ededed"></div>
<svg class="r" style="left:2202px;top:298px;" width="20" height="16" viewBox="0 0 20 16"><path d="M3 5 L17 5 L10 12 Z" fill="#555"/></svg>
<div class="t" style="left:2238.12px;top:297.38px;font-size:24px;line-height:24px;color:#111;font-weight:bold;letter-spacing:0.677px;">Current View</div>
<div class="t" style="left:2465.12px;top:297.38px;font-size:24px;line-height:24px;color:#111;font-weight:bold;letter-spacing:0.839px;">Orbit (rviz)</div>
<div class="t" style="left:2276.62px;top:331.38px;font-size:24px;line-height:24px;color:#1e1e1e;letter-spacing:0.438px;">Near Clip Dist...</div>
<div class="t" style="left:2465.12px;top:331.38px;font-size:24px;line-height:24px;color:#1e1e1e;letter-spacing:-0.117px;">0.01</div>
<div class="t" style="left:2276.38px;top:365.38px;font-size:24px;line-height:24px;color:#1e1e1e;letter-spacing:0.698px;">Invert Z Axis</div>
<div class="t" style="left:2278.00px;top:399.38px;font-size:24px;line-height:24px;color:#1e1e1e;letter-spacing:0.568px;">Target Frame</div>
<div class="t" style="left:2464.88px;top:399.38px;font-size:24px;line-height:24px;color:#1e1e1e;letter-spacing:0.183px;">&lt;Fixed Frame&gt;</div>
<div class="t" style="left:2276.62px;top:433.38px;font-size:24px;line-height:24px;color:#1e1e1e;letter-spacing:0.714px;">Distance</div>
<div class="t" style="left:2464.25px;top:433.38px;font-size:24px;line-height:24px;color:#1e1e1e;letter-spacing:0.675px;">1.0433</div>
<div class="t" style="left:2276.62px;top:467.38px;font-size:24px;line-height:24px;color:#1e1e1e;letter-spacing:-0.258px;">Focal Shape S...</div>
<div class="t" style="left:2465.12px;top:467.38px;font-size:24px;line-height:24px;color:#1e1e1e;letter-spacing:0.375px;">0.05</div>
<div class="t" style="left:2276.62px;top:501.38px;font-size:24px;line-height:24px;color:#1e1e1e;letter-spacing:-0.012px;">Focal Shape F...</div>
<div class="t" style="left:2278.00px;top:535.38px;font-size:24px;line-height:24px;color:#1e1e1e;letter-spacing:-0.562px;">Yaw</div>
<div class="t" style="left:2465.12px;top:535.38px;font-size:24px;line-height:24px;color:#1e1e1e;letter-spacing:0.511px;">0.940387</div>
<div class="t" style="left:2276.62px;top:569.38px;font-size:24px;line-height:24px;color:#1e1e1e;letter-spacing:0.875px;">Pitch</div>
<div class="t" style="left:2465.12px;top:569.38px;font-size:24px;line-height:24px;color:#1e1e1e;letter-spacing:0.511px;">0.320399</div>
<div class="t" style="left:2276.62px;top:603.38px;font-size:24px;line-height:24px;color:#1e1e1e;letter-spacing:0.280px;">Focal Point</div>
<div class="t" style="left:2465.12px;top:603.38px;font-size:24px;line-height:24px;color:#1e1e1e;letter-spacing:0.152px;">0.10681; 0.21921; 0.1...</div>
<div class="r" style="left:2466px;top:363px;width:28px;height:27px;background:#fff;border:1.5px solid #a2a2a2;box-sizing:border-box"></div>
<div class="r" style="left:2466px;top:499px;width:28px;height:27px;background:#fff;border:1.5px solid #a2a2a2;box-sizing:border-box"></div>
<svg class="r" style="left:2466px;top:499px;" width="28" height="27" viewBox="0 0 28 27"><path d="M7 12 L12.5 21 L21 6" fill="none" stroke="#111" stroke-width="3.4"/></svg>
<svg class="r" style="left:2244px;top:607px;" width="16" height="20" viewBox="0 0 16 20"><path d="M4 3 L12 10 L4 17 Z" fill="#555"/></svg>
<div class="r" style="left:2195px;top:1237px;width:168px;height:48px;background:linear-gradient(#fdfdfd,#f1f1f1);border:1.5px solid #a9a9a9;border-radius:3px;box-sizing:border-box"></div>
<div class="t" style="left:2252.00px;top:1249.48px;font-size:24px;line-height:24px;color:#1a1a1a;letter-spacing:-0.317px;">Save</div>
<div class="r" style="left:2376px;top:1237px;width:168px;height:48px;background:linear-gradient(#fdfdfd,#f1f1f1);border:1.5px solid #a9a9a9;border-radius:3px;box-sizing:border-box"></div>
<div class="t" style="left:2414.12px;top:1249.48px;font-size:24px;line-height:24px;color:#1a1a1a;letter-spacing:0.500px;">Remove</div>
<div class="r" style="left:2558px;top:1237px;width:168px;height:48px;background:linear-gradient(#fdfdfd,#f1f1f1);border:1.5px solid #a9a9a9;border-radius:3px;box-sizing:border-box"></div>
<div class="t" style="left:2595.12px;top:1249.48px;font-size:24px;line-height:24px;color:#1a1a1a;letter-spacing:0.525px;">Rename</div>
<svg class="r" style="left:1349px;top:1292px;" width="34" height="3" viewBox="0 0 34 3"><rect x="1" y="1" width="2" height="2" fill="#aaa"/><rect x="7" y="1" width="2" height="2" fill="#aaa"/><rect x="13" y="1" width="2" height="2" fill="#aaa"/><rect x="19" y="1" width="2" height="2" fill="#aaa"/><rect x="25" y="1" width="2" height="2" fill="#aaa"/><rect x="31" y="1" width="2" height="2" fill="#aaa"/></svg>
<div class="r" style="left:0px;top:1302px;width:2732px;height:43px;background:#bababa"></div>
<svg class="r" style="left:3px;top:1309px" width="34" height="33" viewBox="0 0 34 33"><circle cx="17" cy="16.5" r="14" fill="#f4f4f4" stroke="#333" stroke-width="3.2"/><path d="M15 7 L15 18 L25 18" fill="none" stroke="#222" stroke-width="2.6"/></svg>
<div class="t" style="left:47.00px;top:1313.18px;font-size:24px;line-height:24px;color:#1b1b1b;letter-spacing:1.367px;">Time</div>
<div class="r" style="left:2694px;top:1307px;width:33px;height:32px;background:linear-gradient(#fafafa,#ededed);border:1.5px solid #8f8f8f;border-radius:4px;box-sizing:border-box"></div>
<svg class="r" style="left:2700px;top:1312px;" width="21" height="22" viewBox="0 0 21 22"><circle cx="10.5" cy="11" r="10" fill="#d8283c"/><circle cx="10.5" cy="10" r="7" fill="#e8485a"/><path d="M7 7.5 L14 14.5 M14 7.5 L7 14.5" stroke="#fbe0e0" stroke-width="2.4"/></svg>
<div class="t" style="left:16.73px;top:1375.18px;font-size:24px;line-height:24px;color:#1e1e1e;letter-spacing:0.044px;">ROS Time:</div>
<div class="r" style="left:146px;top:1360px;width:215px;height:50px;background:#fff;border:1.5px solid #a8a8a8;border-radius:3px;box-sizing:border-box"></div>
<div class="t" style="left:151.75px;top:1373.48px;font-size:24px;line-height:24px;color:#1e1e1e;letter-spacing:0.392px;">1758920472.99</div>
<div class="t" style="left:372.62px;top:1375.18px;font-size:24px;line-height:24px;color:#1e1e1e;letter-spacing:-0.245px;">ROS Elapsed:</div>
<div class="r" style="left:535px;top:1360px;width:213px;height:50px;background:#fff;border:1.5px solid #a8a8a8;border-radius:3px;box-sizing:border-box"></div>
<div class="t" style="left:541.62px;top:1373.48px;font-size:24px;line-height:24px;color:#1e1e1e;letter-spacing:-0.113px;">57.08</div>
<div class="t" style="left:763.00px;top:1375.18px;font-size:24px;line-height:24px;color:#1e1e1e;letter-spacing:0.500px;">Wall Time:</div>
<div class="r" style="left:891px;top:1360px;width:214px;height:50px;background:#fff;border:1.5px solid #a8a8a8;border-radius:3px;box-sizing:border-box"></div>
<div class="t" style="left:896.75px;top:1373.48px;font-size:24px;line-height:24px;color:#1e1e1e;letter-spacing:0.292px;">1758920473.02</div>
<div class="t" style="left:1118.00px;top:1375.18px;font-size:24px;line-height:24px;color:#1e1e1e;letter-spacing:0.281px;">Wall Elapsed:</div>
<div class="r" style="left:1278px;top:1360px;width:215px;height:50px;background:#fff;border:1.5px solid #a8a8a8;border-radius:3px;box-sizing:border-box"></div>
<div class="t" style="left:1284.62px;top:1373.48px;font-size:24px;line-height:24px;color:#1e1e1e;letter-spacing:0.062px;">57.08</div>
<div class="r" style="left:2510px;top:1373px;width:28px;height:27px;background:#fff;border:1.5px solid #a2a2a2;box-sizing:border-box"></div>
<div class="t" style="left:2547.12px;top:1376.18px;font-size:24px;line-height:24px;color:#1e1e1e;letter-spacing:1.016px;">Experimental</div>
<div class="r" style="left:2px;top:1432px;width:91px;height:47px;background:linear-gradient(#fdfdfd,#f1f1f1);border:1.5px solid #a9a9a9;border-radius:3px;box-sizing:border-box"></div>
<div class="t" style="left:15.12px;top:1444.48px;font-size:24px;line-height:24px;color:#1a1a1a;letter-spacing:0.069px;">Reset</div>
<div class="t" style="left:2660.72px;top:1438.18px;font-size:24px;line-height:24px;color:#1e1e1e;letter-spacing:0.730px;">31 fps</div>
<div class="r" style="left:1px;top:389px;width:701px;height:183px;border:15px solid #77f9fb;border-radius:24px;box-sizing:border-box;z-index:50"></div></body></html>
